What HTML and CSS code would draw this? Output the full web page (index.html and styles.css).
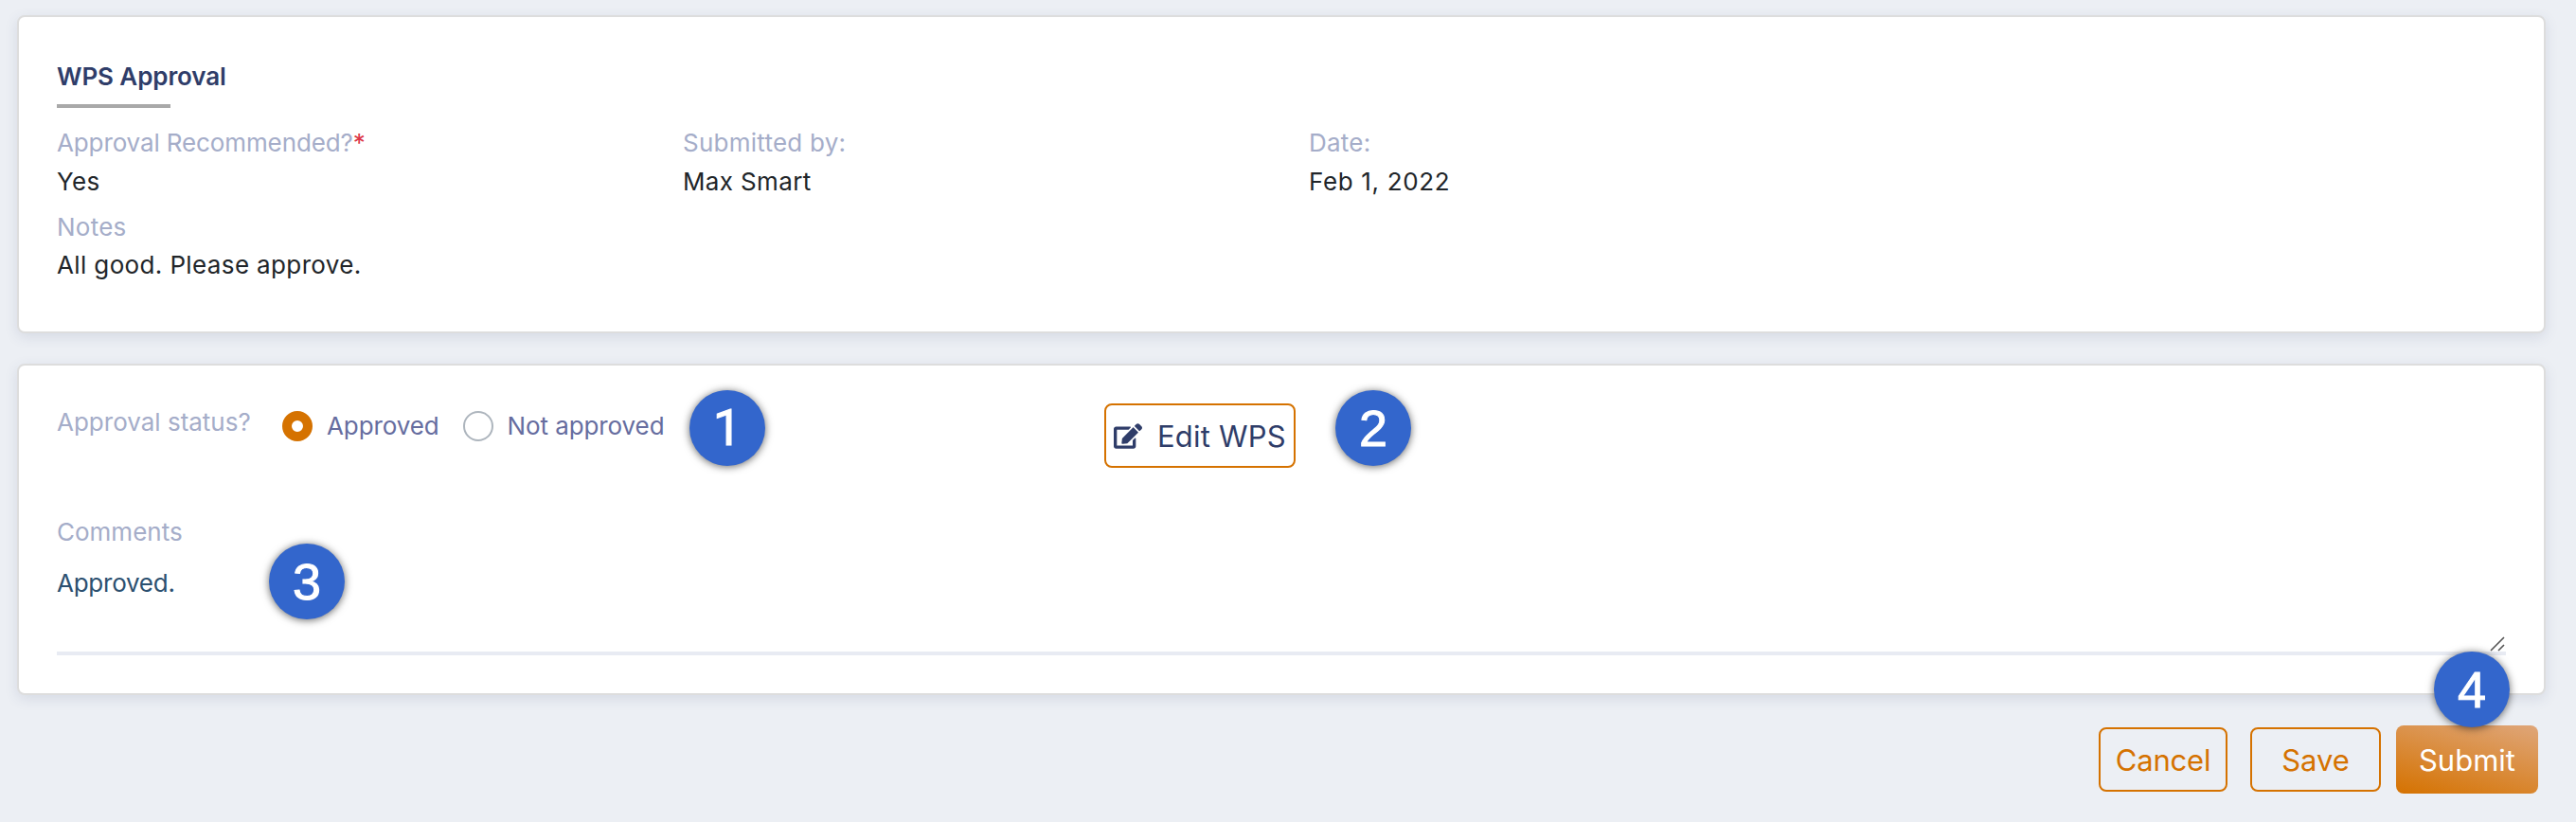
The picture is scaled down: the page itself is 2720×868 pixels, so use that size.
FILE: index.html
```html
<!DOCTYPE html>
<html lang="en">
<head>
    <meta charset="UTF-8">
    <meta name="viewport" content="width=device-width, initial-scale=1.0">
    <title>WPS Approval</title>
    <link rel="stylesheet" href="styles.css">
</head>
<body>
    <section class="card summary">
        <h2>WPS Approval</h2>
        <div class="fields">
            <div class="field recommended">
                <label>Approval Recommended?<span class="required">*</span></label>
                <p>Yes</p>
            </div>
            <div class="field">
                <label>Submitted by:</label>
                <p>Max Smart</p>
            </div>
            <div class="field date">
                <label>Date:</label>
                <p>Feb 1, 2022</p>
            </div>
        </div>
        <div class="field notes">
            <label>Notes</label>
            <p>All good. Please approve.</p>
        </div>
    </section>

    <section class="card review">
        <div class="status-row">
            <div class="status">
                <label class="status-label">Approval status?</label>
                <label class="option"><input type="radio" name="status" checked><span>Approved</span></label>
                <label class="option"><input type="radio" name="status"><span>Not approved</span></label>
            </div>
            <button class="btn edit-btn">
                <svg viewBox="0 0 576 512" width="30" height="27"><path fill="currentColor" d="M402.600 83.200l90.200 90.200c3.800 3.800 3.800 10 0 13.800L274.400 405.600l-92.800 10.300c-12.400 1.400-22.900-9.100-21.500-21.500l10.300-92.800L388.800 83.200c3.800-3.800 10-3.800 13.800 0zm162-22.900l-48.800-48.800c-15.200-15.200-39.900-15.200-55.200 0l-35.400 35.400c-3.800 3.800-3.800 10 0 13.800l90.200 90.200c3.800 3.800 10 3.800 13.800 0l35.400-35.400c15.200-15.300 15.200-40 0-55.200zM384 346.200V448H64V128h229.800c3.200 0 6.200-1.300 8.500-3.500l40-40c7.600-7.600 2.200-20.500-8.500-20.500H48C21.500 64 0 85.500 0 112v352c0 26.500 21.500 48 48 48h352c26.500 0 48-21.500 48-48V306.200c0-10.700-12.900-16-20.500-8.500l-40 40c-2.200 2.300-3.500 5.300-3.500 8.500z"/></svg>
                <span>Edit WPS</span>
            </button>
        </div>
        <div class="comments">
            <label>Comments</label>
            <div class="comment-box">
                Approved.
                <svg class="resize" width="16" height="16" viewBox="0 0 16 16"><path d="M1 15L15 1M9 15L15 9" stroke="#555" stroke-width="1.6" fill="none"/></svg>
            </div>
        </div>
    </section>

    <div class="actions">
        <button class="btn cancel">Cancel</button>
        <button class="btn save">Save</button>
        <button class="btn submit">Submit</button>
    </div>

    <span class="step step-1">1</span>
    <span class="step step-2">2</span>
    <span class="step step-3">3</span>
    <span class="step step-4">4</span>
</body>
</html>
```
FILE: styles.css
```css
* {
    box-sizing: border-box;
}
body {
    position: relative;
    margin: 0;
    padding: 16px 32px 0 18px;
    height: 868px;
    overflow: hidden;
    background: #eceff4;
    font-family: Inter, "Liberation Sans", sans-serif;
    font-size: 26px;
    line-height: 40px;
    color: #212529;
}
.card {
    background: #fff;
    border: 2px solid #ddd;
    border-radius: 8px;
    box-shadow: 0 4px 14px rgba(60, 75, 120, 0.13);
    padding: 0 40px;
}
.summary {
    height: 336px;
    padding-top: 43px;
}
.review {
    height: 350px;
    margin-top: 32px;
    padding-top: 40px;
}
h2 {
    margin: 0 0 17px;
    font-size: 26px;
    font-weight: 600;
    letter-spacing: -0.1px;
    color: #2f3d69;
}
h2::after {
    content: "";
    display: block;
    width: 120px;
    height: 4px;
    margin-top: 9px;
    background: #a9a9a9;
}
.fields {
    display: grid;
    grid-template-columns: 661px 661px 1fr;
}
label {
    color: #a5adc9;
}
.field label {
    display: block;
    letter-spacing: 0.25px;
}
.recommended label {
    letter-spacing: -0.12px;
}
.field p {
    margin: 0;
    line-height: 42px;
    letter-spacing: 0.37px;
}
.date p {
    letter-spacing: 0.65px;
}
.required {
    color: #dc3545;
}
.notes {
    margin-top: 7px;
}
.notes p {
    line-height: 40px;
}
.status-row {
    display: flex;
    align-items: flex-start;
    height: 116px;
}
.status {
    display: flex;
    width: 1106px;
}
.status-label {
    width: 238px;
}
.option {
    display: flex;
    align-items: center;
    gap: 15px;
    height: 40px;
    margin: 4px 25px 0 0;
    letter-spacing: -0.1px;
    color: #666d9f;
}
.option input {
    appearance: none;
    width: 32px;
    height: 32px;
    margin: 0;
    border: 2px solid #adb5bd;
    border-radius: 50%;
}
.option input:checked {
    border: 10px solid #d57200;
}
.btn {
    height: 68px;
    padding: 0;
    border: 2px solid #d57200;
    border-radius: 8px;
    background: none;
    font-family: inherit;
    font-size: 31px;
    color: #d57200;
}
.edit-btn {
    display: flex;
    align-items: center;
    gap: 16px;
    width: 202px;
    padding-left: 8px;
    letter-spacing: 0.2px;
    color: #2f3d69;
}
.comments label {
    display: block;
}
.comment-box {
    position: relative;
    height: 110px;
    padding-top: 14px;
    border-bottom: 4px solid #e8ebf3;
    letter-spacing: -0.25px;
    color: #2c5070;
}
.resize {
    position: absolute;
    right: 1px;
    bottom: 0;
}
.actions {
    display: flex;
    justify-content: flex-end;
    align-items: center;
    margin: 32px 8px 0 0;
}
.cancel {
    width: 136px;
    margin-right: 24px;
    letter-spacing: -0.2px;
}
.save {
    width: 138px;
    margin-right: 16px;
}
.submit {
    width: 150px;
    height: 72px;
    border: none;
    color: #fff;
    background: linear-gradient(15deg, #d57200, #dfa679);
}
/* numbered callouts over the form */
.step {
    position: absolute;
    width: 80px;
    height: 80px;
    border-radius: 50%;
    background: #3366cc;
    box-shadow: 0 1px 8px rgba(0, 0, 0, 0.6);
    font-family: "Liberation Sans", Arial, sans-serif;
    font-size: 54px;
    line-height: 80px;
    text-align: center;
    color: #fff;
    -webkit-text-stroke: 1px #fff;
}
.step-1 {
    left: 728px;
    top: 412px;
    font-family: Roboto, sans-serif;
}
.step-2 {
    left: 1410px;
    top: 412px;
}
.step-3 {
    left: 284px;
    top: 574px;
}
.step-4 {
    left: 2570px;
    top: 688px;
}
```
